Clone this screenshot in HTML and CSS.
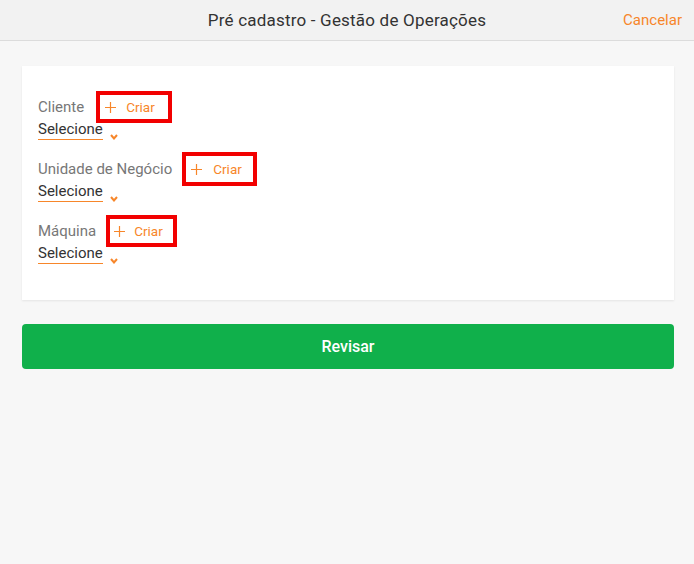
FILE: index.html
```html
<!DOCTYPE html>
<html lang="pt-BR">
<head>
<meta charset="utf-8">
<title>Pré cadastro - Gestão de Operações</title>
<link rel="stylesheet" href="styles.css">
</head>
<body>
<header class="topbar">
  <div class="topbar-side"></div>
  <h1 class="topbar-title">Pré cadastro - Gestão de Operações</h1>
  <div class="topbar-side topbar-right"><a class="cancel" href="#">Cancelar</a></div>
</header>
<main class="content">
  <section class="card">
    <div class="field">
      <div class="field-head">
        <span class="field-label">Cliente</span>
        <button class="create create-first" type="button">
          <svg class="plus" viewBox="0 0 11 11" width="11" height="11"><path d="M5.5 0V11M0 5.5H11" stroke="currentColor" stroke-width="1.2" fill="none"/></svg>
          <span>Criar</span>
        </button>
      </div>
      <div class="select">
        <span class="select-value">Selecione</span>
        <svg class="caret" viewBox="0 0 8 6" width="8" height="6"><path d="M1 1L4 4.5L7 1" stroke="currentColor" stroke-width="2" fill="none"/></svg>
      </div>
    </div>
    <div class="field">
      <div class="field-head">
        <span class="field-label">Unidade de Negócio</span>
        <button class="create create-wide" type="button">
          <svg class="plus" viewBox="0 0 11 11" width="11" height="11"><path d="M5.5 0V11M0 5.5H11" stroke="currentColor" stroke-width="1.2" fill="none"/></svg>
          <span>Criar</span>
        </button>
      </div>
      <div class="select">
        <span class="select-value">Selecione</span>
        <svg class="caret" viewBox="0 0 8 6" width="8" height="6"><path d="M1 1L4 4.5L7 1" stroke="currentColor" stroke-width="2" fill="none"/></svg>
      </div>
    </div>
    <div class="field">
      <div class="field-head">
        <span class="field-label">Máquina</span>
        <button class="create" type="button">
          <svg class="plus" viewBox="0 0 11 11" width="11" height="11"><path d="M5.5 0V11M0 5.5H11" stroke="currentColor" stroke-width="1.2" fill="none"/></svg>
          <span>Criar</span>
        </button>
      </div>
      <div class="select">
        <span class="select-value">Selecione</span>
        <svg class="caret" viewBox="0 0 8 6" width="8" height="6"><path d="M1 1L4 4.5L7 1" stroke="currentColor" stroke-width="2" fill="none"/></svg>
      </div>
    </div>
  </section>
  <button class="primary" type="button">Revisar</button>
</main>
</body>
</html>
```
FILE: styles.css
```css
* { box-sizing: border-box; }

html, body {
  margin: 0;
  padding: 0;
}

body {
  background: #f7f7f7;
  font-family: Roboto, "Liberation Sans", Arial, sans-serif;
  color: #333;
  min-height: 564px;
}

.topbar {
  height: 41px;
  background: #f2f2f2;
  border-bottom: 1px solid #dcdcdc;
  display: grid;
  grid-template-columns: 1fr auto 1fr;
  align-items: center;
}

.topbar-title {
  margin: 0;
  font-size: 17px;
  line-height: 20px;
  font-weight: 400;
  color: #333;
  letter-spacing: 0.2px;
}

.topbar-right {
  display: flex;
  justify-content: flex-end;
  padding-right: 12px;
}

.cancel {
  color: #f7862a;
  text-decoration: none;
  font-size: 15px;
}

.content {
  padding: 25px 20px 25px 22px;
}

.card {
  background: #fff;
  box-shadow: 0 1px 2px rgba(0, 0, 0, 0.08);
  padding: 29px 16px 36px;
}

.field + .field {
  margin-top: 17px;
}

.field-head {
  height: 24px;
  display: flex;
  align-items: center;
  gap: 10px;
}

.field-label {
  font-size: 15px;
  line-height: 20px;
  color: #777;
}

.create {
  height: 32px;
  margin: -4px 0;
  border: 4px solid #f20000;
  background: #fff;
  color: #f7862a;
  font-family: inherit;
  font-size: 13.5px;
  display: flex;
  align-items: center;
  gap: 9px;
  padding: 0 10px 0 4px;
  cursor: pointer;
}

.create-first {
  margin-left: 2px;
  gap: 10px;
  padding: 0 13px 0 5px;
}

.create-wide {
  height: 34px;
  margin: -5px 0;
  gap: 11px;
  padding: 0 11px 0 5px;
}

.plus {
  display: block;
}

.select {
  display: flex;
  align-items: flex-end;
  gap: 7px;
}

.select-value {
  font-size: 15px;
  line-height: 20px;
  color: #333;
  border-bottom: 1px solid #f7862a;
}

.caret {
  color: #f7862a;
  margin-bottom: 0;
}

.primary {
  display: block;
  width: 100%;
  margin-top: 24px;
  height: 45px;
  border: 0;
  border-radius: 4px;
  background: #10b04b;
  color: #fff;
  font-family: inherit;
  font-size: 16px;
  font-weight: 500;
  cursor: pointer;
}
```
